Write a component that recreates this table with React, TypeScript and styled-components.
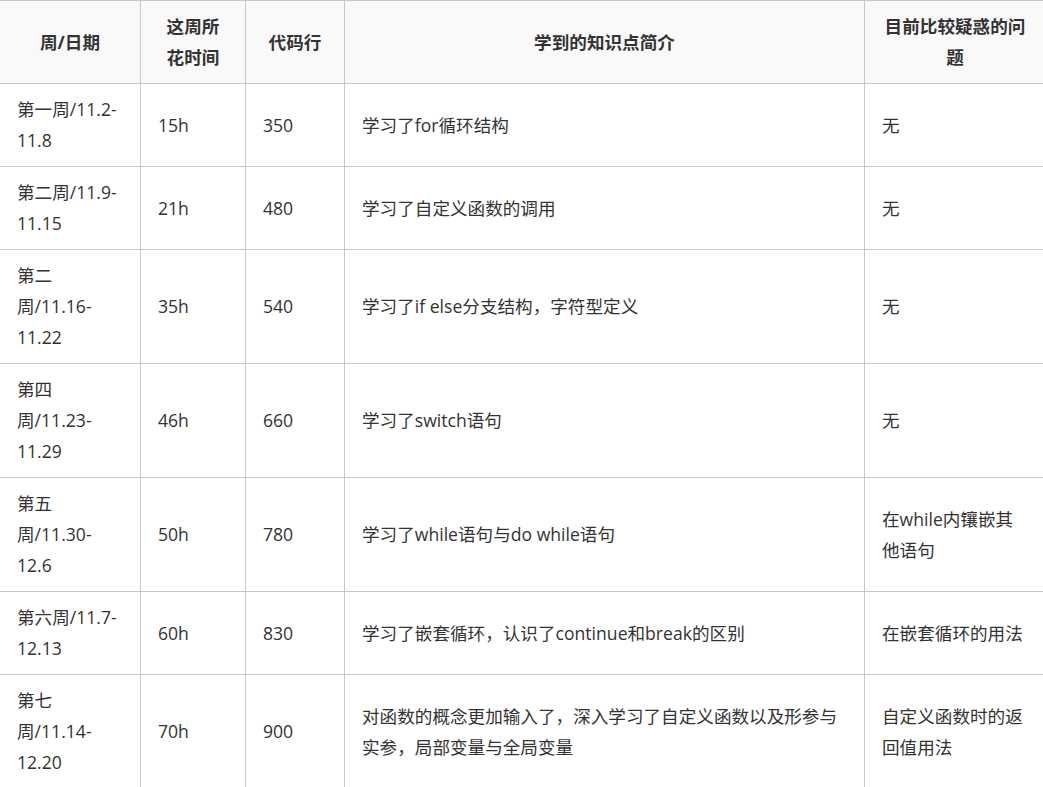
import React from 'react';
import styled, { createGlobalStyle } from 'styled-components';

const GlobalStyle = createGlobalStyle`
  html, body {
    margin: 0;
    padding: 0;
    background: #fff;
  }
  body {
    font-family: "Open Sans", "Noto Sans CJK SC", sans-serif;
    color: #333;
    overflow: hidden;
  }
`;

const Table = styled.table`
  border-collapse: collapse;
  table-layout: fixed;
  width: 1046px;
  margin-left: -1px;
  font-size: 17.6px;
  line-height: 31px;
`;

const HeadCell = styled.th`
  background: #f9f9f9;
  border: 1px solid #c8c8c8;
  padding: 10px 16px;
  font-weight: 700;
  text-align: center;
  vertical-align: middle;
  white-space: nowrap;
  color: #333;
`;

const Cell = styled.td`
  border: 1px solid #c8c8c8;
  padding: 10px 16px 10px 17px;
  vertical-align: middle;
  white-space: nowrap;
  color: #333;
`;

type Row = {
  week: string[];
  hours: string;
  lines: string;
  learned: string[];
  question: string[];
};

const rows: Row[] = [
  { week: ['第一周/11.2-', '11.8'], hours: '15h', lines: '350', learned: ['学习了for循环结构'], question: ['无'] },
  { week: ['第二周/11.9-', '11.15'], hours: '21h', lines: '480', learned: ['学习了自定义函数的调用'], question: ['无'] },
  { week: ['第二', '周/11.16-', '11.22'], hours: '35h', lines: '540', learned: ['学习了if else分支结构，字符型定义'], question: ['无'] },
  { week: ['第四', '周/11.23-', '11.29'], hours: '46h', lines: '660', learned: ['学习了switch语句'], question: ['无'] },
  { week: ['第五', '周/11.30-', '12.6'], hours: '50h', lines: '780', learned: ['学习了while语句与do while语句'], question: ['在while内镶嵌其', '他语句'] },
  { week: ['第六周/11.7-', '12.13'], hours: '60h', lines: '830', learned: ['学习了嵌套循环，认识了continue和break的区别'], question: ['在嵌套循环的用法'] },
  {
    week: ['第七', '周/11.14-', '12.20'],
    hours: '70h',
    lines: '900',
    learned: ['对函数的概念更加输入了，深入学习了自定义函数以及形参与', '实参，局部变量与全局变量'],
    question: ['自定义函数时的返', '回值用法'],
  },
];

const Lines = ({ items }: { items: string[] }) => (
  <>
    {items.map((t, i) => (
      <React.Fragment key={i}>
        {i > 0 && <br />}
        {t}
      </React.Fragment>
    ))}
  </>
);

const App = () => (
  <>
    <GlobalStyle />
    <Table>
      <colgroup>
        <col style={{ width: 141 }} />
        <col style={{ width: 105 }} />
        <col style={{ width: 99 }} />
        <col style={{ width: 520 }} />
        <col style={{ width: 181 }} />
      </colgroup>
      <thead>
        <tr>
          <HeadCell>周/日期</HeadCell>
          <HeadCell>
            <Lines items={['这周所', '花时间']} />
          </HeadCell>
          <HeadCell>代码行</HeadCell>
          <HeadCell>学到的知识点简介</HeadCell>
          <HeadCell>
            <Lines items={['目前比较疑惑的问', '题']} />
          </HeadCell>
        </tr>
      </thead>
      <tbody>
        {rows.map((r, i) => (
          <tr key={i}>
            <Cell>
              <Lines items={r.week} />
            </Cell>
            <Cell>{r.hours}</Cell>
            <Cell>{r.lines}</Cell>
            <Cell>
              <Lines items={r.learned} />
            </Cell>
            <Cell>
              <Lines items={r.question} />
            </Cell>
          </tr>
        ))}
      </tbody>
    </Table>
  </>
);

export default App;
